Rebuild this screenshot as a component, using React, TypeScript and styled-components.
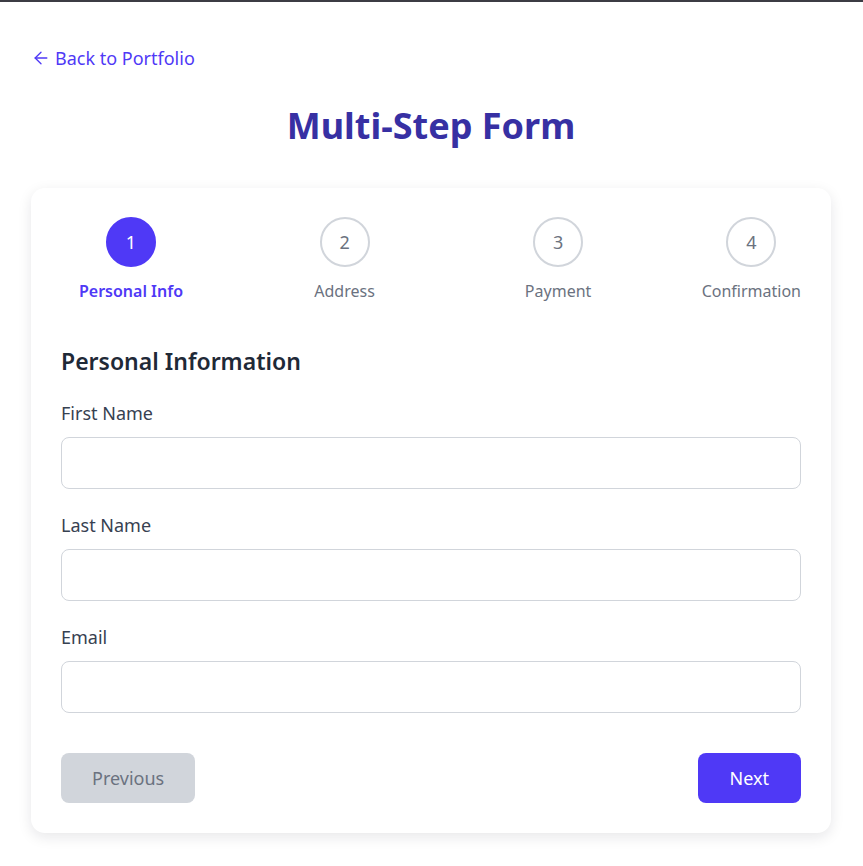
import { FC } from 'react';
import styled, { createGlobalStyle } from 'styled-components';
import { ArrowLeft } from 'lucide-react';

const Color = {
    primary: '#4f39f6',
    title: '#3730a3',
    text: '#1f2937',
    label: '#374151',
    muted: '#6b7280',
    border: '#d1d5db',
    white: '#ffffff',
};

const GlobalStyle = createGlobalStyle`
    * {
        box-sizing: border-box;
    }
    body {
        margin: 0;
        background-color: ${Color.white};
        border-top: 2px solid #3c3c44;
        font-family: "Noto Sans", "Open Sans", sans-serif;
        color: ${Color.text};
    }
`;

const steps = ['Personal Info', 'Address', 'Payment', 'Confirmation'];
const fields = ['First Name', 'Last Name', 'Email'];

const App: FC = () => {
    return (
        <>
            <GlobalStyle />
            <Spage>
                <SbackLink href="#">
                    <ArrowLeft size={20} strokeWidth={1.6} /> Back to Portfolio
                </SbackLink>
                <Stitle>Multi-Step Form</Stitle>
                <Scard>
                    <Ssteps>
                        {steps.map((label, i) => (
                            <Sstep key={label} $last={i === steps.length - 1}>
                                <SstepBody $last={i === steps.length - 1}>
                                    <Scircle $active={i === 0}>{i + 1}</Scircle>
                                    <SstepLabel $active={i === 0}>{label}</SstepLabel>
                                </SstepBody>
                            </Sstep>
                        ))}
                    </Ssteps>
                    <Sheading>Personal Information</Sheading>
                    {fields.map((name) => (
                        <Sfield key={name}>
                            <label>{name}</label>
                            <input type="text" />
                        </Sfield>
                    ))}
                    <Sactions>
                        <Sbutton type="button" disabled>Previous</Sbutton>
                        <Sbutton type="button" $primary>Next</Sbutton>
                    </Sactions>
                </Scard>
            </Spage>
        </>
    );
};

export default App;

const Spage = styled.main`
    padding: 44px 32px 32px 31px;
`;

const SbackLink = styled.a`
    display: flex;
    width: fit-content;
    align-items: center;
    gap: 4px;
    font-size: 18px;
    line-height: 24px;
    color: ${Color.primary};
    text-decoration: none;
`;

const Stitle = styled.h1`
    margin: 34px 0 40px;
    text-align: center;
    font-size: 36px;
    line-height: 44px;
    font-weight: 700;
    color: ${Color.title};
`;

const Scard = styled.section`
    background-color: ${Color.white};
    border-radius: 14px;
    box-shadow: 0 4px 14px rgba(15, 23, 42, 0.1);
    padding: 29px 30px 30px;
`;

const Ssteps = styled.div`
    display: flex;
    margin-bottom: 43px;
`;

const Sstep = styled.div<{ $last?: boolean }>`
    flex: ${({ $last }) => ($last ? '0 0 auto' : '1 1 0')};
    display: flex;
`;

const SstepBody = styled.div<{ $last?: boolean }>`
    width: ${({ $last }) => ($last ? 'auto' : '140px')};
    display: flex;
    flex-direction: column;
    align-items: center;
    gap: 12px;
`;

const Scircle = styled.div<{ $active?: boolean }>`
    width: 50px;
    height: 50px;
    border-radius: 50%;
    display: flex;
    align-items: center;
    justify-content: center;
    font-size: 18px;
    background-color: ${({ $active }) => ($active ? Color.primary : Color.white)};
    border: 2px solid ${({ $active }) => ($active ? Color.primary : Color.border)};
    color: ${({ $active }) => ($active ? Color.white : Color.muted)};
`;

const SstepLabel = styled.span<{ $active?: boolean }>`
    font-size: 16px;
    line-height: 24px;
    white-space: nowrap;
    font-weight: ${({ $active }) => ($active ? 600 : 400)};
    color: ${({ $active }) => ($active ? Color.primary : Color.muted)};
`;

const Sheading = styled.h2`
    margin: 0 0 25px;
    font-size: 23px;
    line-height: 30px;
    font-weight: 600;
    color: ${Color.text};
`;

const Sfield = styled.div`
    display: flex;
    flex-direction: column;
    gap: 12px;
    margin-bottom: 24px;

    label {
        font-size: 18px;
        line-height: 24px;
        color: ${Color.label};
    }

    input {
        height: 52px;
        padding: 0 14px;
        border: 1px solid ${Color.border};
        border-radius: 8px;
        font: inherit;
        font-size: 18px;
        outline: none;
    }
`;

const Sactions = styled.div`
    display: flex;
    justify-content: space-between;
    margin-top: 40px;
`;

const Sbutton = styled.button<{ $primary?: boolean }>`
    height: 50px;
    padding: 0 ${({ $primary }) => ($primary ? '32px' : '31px')};
    border: none;
    border-radius: 8px;
    font-family: inherit;
    font-size: 18px;
    background-color: ${({ $primary }) => ($primary ? Color.primary : Color.border)};
    color: ${({ $primary }) => ($primary ? Color.white : Color.muted)};
    cursor: pointer;

    &:disabled {
        cursor: not-allowed;
    }
`;
